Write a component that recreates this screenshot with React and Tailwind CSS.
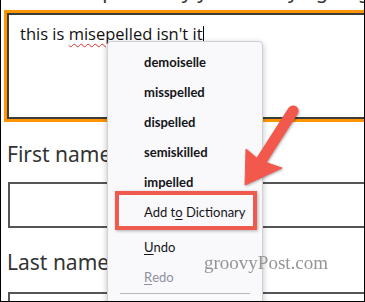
import React from 'react';

const suggestions = ['demoiselle', 'misspelled', 'dispelled', 'semiskilled', 'impelled'];

const App = () => {
  return (
    <div className="relative w-[365px] h-[302px] overflow-hidden bg-white border-x border-b border-black font-['Noto_Sans',sans-serif]">
      {/* sentence above the field, only its descenders are in view */}
      <div className="-mt-[21px] pl-[14px] text-[20px] leading-[24px] text-[#333] whitespace-nowrap">
        Please explain why you are trying to get in touch today, if any
      </div>

      {/* focused textarea */}
      <div className="mt-[7px] ml-[3px] -mr-[10px] h-[112px] border-[3px] border-[#ff9500]">
        <div className="h-full border-2 border-[#3c3c3c] pl-[11px] pt-[7px]">
          <p className="text-[16.5px] leading-[24px] text-[#111] whitespace-nowrap font-['Open_Sans',sans-serif]">
            this is{' '}
            <span className="underline decoration-wavy decoration-[#e0302a] decoration-1 underline-offset-[3px]">misepelled</span>{' '}
            isn't it
            <span className="inline-block w-px h-[17px] bg-black align-[-3px]" />
          </p>
        </div>
      </div>

      <label className="block mt-[18px] pl-[6px] text-[21px] leading-[28px] text-[#333]">First name</label>
      <div className="mt-[14px] ml-[7px] -mr-[10px] h-[46px] border-2 border-[#555]" />

      <label className="block mt-[20px] pl-[6px] text-[21px] leading-[28px] text-[#333]">Last name</label>
      <div className="mt-[16px] ml-[7px] -mr-[10px] h-[46px] border-2 border-[#555]" />

      {/* spelling context menu */}
      <div className="absolute left-[106px] top-[41px] w-[156px] h-[290px] bg-[#f9f9fb] border border-[#cfcfd8] rounded-[4px] shadow-[0_2px_6px_rgba(0,0,0,0.25)] pt-[5px] text-[13px] leading-none text-[#15141a] font-['Lato',sans-serif]">
        {suggestions.map((word) => (
          <div key={word} className="h-[30px] flex items-center pl-[36px] font-bold">
            {word}
          </div>
        ))}
        <div className="h-[30px] flex items-center pl-[36px]">
          Add t<span className="underline underline-offset-2">o</span>&nbsp;Dictionary
        </div>
        <div className="h-[5px] flex items-center mx-[12px]">
          <div className="w-full h-px bg-[#d0d0d7]" />
        </div>
        <div className="h-[30px] flex items-center pl-[36px]">
          <span className="underline underline-offset-2">U</span>ndo
        </div>
        <div className="h-[30px] flex items-center pl-[36px] text-[#8f8f9d]">
          <span className="underline underline-offset-2">R</span>edo
        </div>
        <div className="h-[3px] flex items-center mx-[12px]">
          <div className="w-full h-px bg-[#b8b8c0]" />
        </div>
      </div>

      {/* highlight box */}
      <div className="absolute left-[114px] top-[191px] w-[142px] h-[39px] border-[4px] border-[#ee5a4e] shadow-[1px_1px_3px_rgba(0,0,0,0.3)]" />

      {/* arrow */}
      <svg className="absolute left-[230px] top-[95px]" width="80" height="100" viewBox="230 95 80 100">
        <g fill="#f2584c" stroke="#f2584c" style={{ filter: 'drop-shadow(1px 1px 1px rgba(0,0,0,0.3))' }}>
          <line x1="292" y1="111" x2="260" y2="161" strokeWidth="11" strokeLinecap="round" />
          <polygon points="244,185 245,149 258,160 281,168" strokeWidth="1" strokeLinejoin="round" />
        </g>
      </svg>

      {/* watermark */}
      <div className="absolute left-[203px] top-[253px] text-[19px] leading-none text-[#8a8a8a] opacity-90 font-['Liberation_Serif',serif]">
        groovyPost.com
      </div>
    </div>
  );
};

export default App;
